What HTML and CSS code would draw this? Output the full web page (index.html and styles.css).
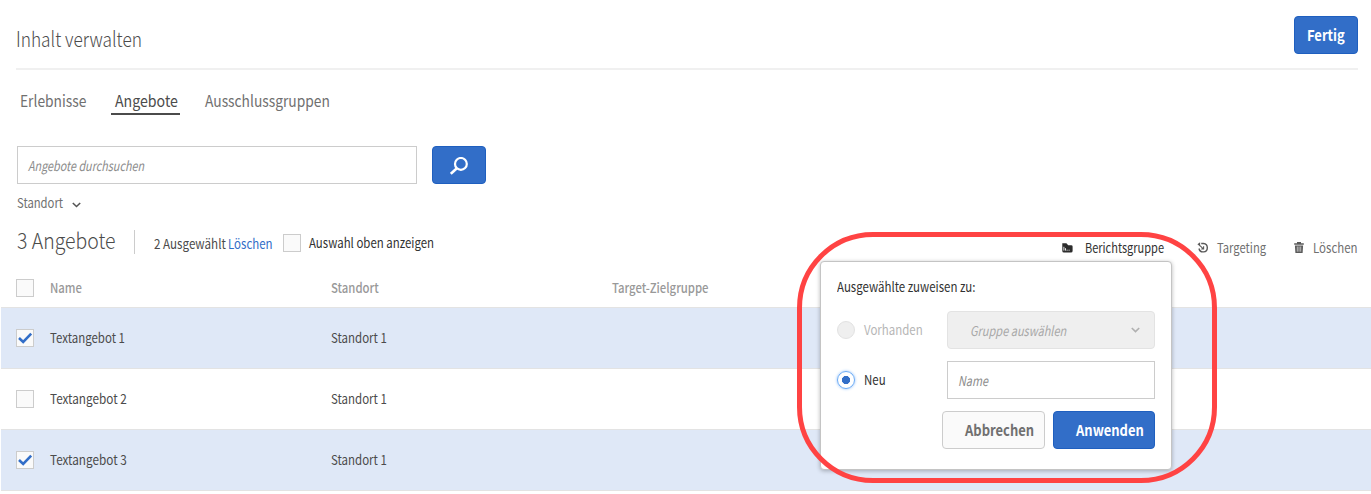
FILE: index.html
```
<!DOCTYPE html>
<html lang="de">
<head>
<meta charset="utf-8">
<title>Inhalt verwalten</title>
<link rel="stylesheet" href="styles.css">
</head>
<body>
<header class="header">
  <h1 class="title">Inhalt verwalten</h1>
  <button class="btn primary done"><span class="label">Fertig</span></button>
</header>
<nav class="tabs">
  <a class="tab t-exp"><span>Erlebnisse</span></a>
  <a class="tab t-off active"><span>Angebote</span></a>
  <a class="tab t-exc"><span>Ausschlussgruppen</span></a>
</nav>
<div class="search">
  <div class="field search-field"><span class="ph ph-search">Angebote durchsuchen</span></div>
  <button class="btn primary search-btn" aria-label="Suchen">
    <svg width="18" height="18" viewBox="0 0 18 18" fill="none" stroke="#fff"><circle cx="10.9" cy="6.9" r="5.9" stroke-width="2.2"/><path d="M6.9 11.2L.8 16.8" stroke-width="2.6"/></svg>
  </button>
</div>
<div class="filter"><span class="filter-label">Standort</span>
  <svg width="9" height="6" viewBox="0 0 9 6" fill="none" stroke="#555" stroke-width="1.6"><path d="M.8 1L4.5 4.5L8.2 1"/></svg>
</div>
<div class="toolbar">
  <div class="count-box"><h2 class="count">3 Angebote</h2></div>
  <div class="selection">
    <span class="selected">2 Ausgewählt</span><a class="clear">Löschen</a>
    <span class="check"></span><span class="on-top">Auswahl oben anzeigen</span>
  </div>
  <div class="actions">
    <span class="action current"><svg width="11" height="10" viewBox="0 0 11 10"><path fill="#2c2c2c" d="M.3 .2H4.4L6.2 2.2H9.2Q10.6 2.2 10.6 3.5V8Q10.6 9.5 9 9.5H2Q.3 9.5 .3 8Z"/><path d="M1.9 3.8V7.6M3.5 5.2V7.6M4.6 7.2H5.6M6.6 7.2H7.6" stroke="#fff" stroke-width=".9"/></svg><span class="a-group">Berichtsgruppe</span></span>
    <span class="action"><svg width="12" height="11" viewBox="0 0 12 11" fill="none" stroke="#5a5a5a" stroke-width="1.4"><path d="M4.2 1.5H6.5A4.2 4.2 0 1 1 2 6.5"/><path d="M.4 2.3L3.1 .3V4.4Z" fill="#5a5a5a" stroke="none"/><path d="M3 3.7L6.3 6.8M6.6 4.3V7H4.2" stroke-width="1.1"/></svg><span class="a-target">Targeting</span></span>
    <span class="action"><svg width="10" height="11" viewBox="0 0 10 11"><path fill="#5a5a5a" d="M3 0H7V1.3H9.8V2.7H.2V1.3H3Z M.9 3.5H9.1L8.6 11H1.4Z"/><path d="M3.3 4.5V9.7M5 4.5V9.7M6.7 4.5V9.7" stroke="#fff" stroke-width=".6"/></svg><span class="a-delete">Löschen</span></span>
  </div>
</div>
<main class="grid">
  <div class="row head"><span class="check"></span><span class="cell">Name</span><span class="cell">Standort</span><span class="cell">Target-Zielgruppe</span></div>
  <div class="row picked"><span class="check"><svg class="tick" viewBox="0 0 16 16"><path d="M2 8L6.2 12L14.2 3.7"/></svg></span><span class="cell">Textangebot 1</span><span class="cell">Standort 1</span></div>
  <div class="row"><span class="check"></span><span class="cell wide">Textangebot 2</span><span class="cell">Standort 1</span></div>
  <div class="row picked"><span class="check"><svg class="tick" viewBox="0 0 16 16"><path d="M2 8L6.2 12L14.2 3.7"/></svg></span><span class="cell wide">Textangebot 3</span><span class="cell">Standort 1</span></div>
</main>
<section class="popover">
  <div class="pop-title">Ausgewählte zuweisen zu:</div>
  <div class="option disabled"><span class="radio"></span><span class="opt-label">Vorhanden</span>
    <div class="field select"><span class="ph ph-select">Gruppe auswählen</span><svg width="9" height="6" viewBox="0 0 9 6" fill="none" stroke="#b0b0b0" stroke-width="1.7"><path d="M.8 1L4.5 4.5L8.2 1"/></svg></div>
  </div>
  <div class="option"><span class="radio on"></span><span class="opt-label">Neu</span>
    <div class="field"><span class="ph ph-name">Name</span></div>
  </div>
  <div class="buttons"><button class="btn cancel"><span class="label">Abbrechen</span></button><button class="btn primary apply"><span class="label">Anwenden</span></button></div>
</section>
<div class="highlight"></div>
</body>
</html>
```
FILE: styles.css
```
* { box-sizing: border-box; }
body {
  margin: 0; width: 1371px; height: 494px; overflow: hidden; position: relative;
  background: #fff; color: #4b4b4b; white-space: nowrap;
  font: 13.5px/18px "Noto Sans CJK SC", "Noto Sans", sans-serif;
}
svg { display: block; flex: none; }

/* condensed text */
.title, .tab span, .ph, .filter-label, .count, .selected, .clear, .on-top,
.a-group, .a-target, .a-delete, .cell, .pop-title, .opt-label, .label {
  transform: translateY(var(--y, 0)) scaleX(var(--w, .85)); transform-origin: 0 50%;
}
.tab span, .filter-label, .a-group, .a-target, .a-delete, .cell, .opt-label { --y: -1px; }

.header {
  display: flex; align-items: flex-start; justify-content: space-between;
  height: 70px; margin: 0 13px 0 16px; padding-top: 16px; border-bottom: 2px solid #f0f0f0;
}
.title { --w: .823; margin: 9px 0 0; font-size: 21px; line-height: 26px; font-weight: 300; }
.btn {
  display: flex; align-items: center; height: 38px; padding: 0; border-radius: 4px;
  border: 1px solid #ccc; background: #fafafa; color: #707070;
  font-family: inherit; font-size: 15px; line-height: 20px; font-weight: 700;
}
.label { --w: .865; }
.primary { background: #326ec8; border-color: #1f5fbf; color: #fff; }
.done { width: 64px; padding-left: 12px; }
.tabs { display: flex; gap: 21px; margin: 20px 0 0 17px; height: 25px; }
.tab { padding: 0 3px; font-size: 16px; line-height: 22px; height: 25px; color: #707070; }
.tab span { display: inline-block; --w: .862; }
.tab.active { width: 69px; color: #4b4b4b; border-bottom: 2px solid #4b4b4b; }
.active span { --w: .885; }
.t-exp { width: 73px; }
.t-off, .t-exc { padding-left: 4px; }
.search { display: flex; gap: 15px; margin: 31px 0 0 17px; }
.field {
  display: flex; align-items: center; width: 208px; height: 38px; padding: 0 10px;
  border: 1px solid #ccc; background: #fff;
}
.search-field { width: 400px; }
.search-btn { width: 54px; justify-content: center; }
.search-btn svg { margin-top: 2px; }
.ph { font-style: italic; color: #8c8c8c; --w: .8; --y: -.5px; }
.ph-select { --w: .815; }
.filter { display: flex; align-items: center; height: 18px; margin: 10px 0 0 17px; color: #707070; }
.filter svg { margin-top: 3px; }
.filter-label { width: 55px; --w: .835; }
.toolbar { display: flex; height: 45px; margin: 11px 14px 0 17px; }
.count-box { width: 118px; margin-top: 7px; height: 24px; border-right: 1px solid #ccc; }
.count { margin: -2px 0 0; font-size: 22px; line-height: 22px; font-weight: 300; --w: .884; }
.selection { display: flex; align-items: center; height: 18px; margin: 11px 0 0 19px; }
.selected { width: 74px; --w: .86; }
.clear { width: 55px; color: #326ec8; }
.check { width: 18px; height: 18px; flex: none; border: 1px solid #ccc; background: #fafafa; }
.on-top { margin-left: 8px; width: 126px; color: #323232; --w: .847; --y: -1px; }
.actions { display: flex; margin: 15px 0 0 auto; height: 19px; }
.action { display: flex; align-items: center; color: #707070; }
.current { color: #323232; }
.a-group { margin-left: 12px; width: 112px; --w: .815; }
.a-target { margin-left: 8px; width: 77px; --w: .83; }
.a-delete { margin-left: 9px; width: 44px; }
.grid { margin-left: 1px; }
.row {
  display: grid; grid-template-columns: 34px 281px 281px 1fr; align-items: center;
  height: 61px; padding-left: 15px; border-bottom: 1px solid #e3e3e3;
}
.head { height: 40px; color: #999; font-weight: 500; }
.head .cell { --w: .84; }
.row .wide { --w: .87; }
.picked { background: #dfe8f7; }
.tick { width: 16px; height: 16px; fill: none; stroke: #326ec8; stroke-width: 2.6; }
.popover {
  position: absolute; left: 820px; top: 261px; width: 352px; height: 209px; padding: 15px 16px 0;
  background: #fff; border: 1px solid #c4c4c4; border-radius: 4px; box-shadow: 0 1px 4px rgba(0,0,0,.28);
  color: #323232;
}
.pop-title { height: 18px; }
.option { display: flex; align-items: center; height: 38px; margin-top: 12px; }
.pop-title + .option { margin-top: 16px; }
.radio { width: 18px; height: 18px; border-radius: 50%; border: 1px solid #e2e2e2; background: #efefef; }
.on { border: 1px solid #6aaaf5; background: radial-gradient(circle, #326ec8 3.8px, #fff 4.4px); box-shadow: 0 0 3px #8bbcfa; }
.opt-label { width: 75px; margin-left: 8.5px; }
.option .field { margin-left: 8.5px; }
.disabled { color: #b6b6b6; }
.disabled .ph { color: #a8a8a8; }
.option .select { background: #efefef; border-color: #e3e3e3; border-radius: 4px; padding: 0 14px 0 22px; justify-content: space-between; }
.buttons { display: flex; justify-content: flex-end; gap: 8px; margin-top: 12px; }
.cancel { width: 103px; padding-left: 22px; }
.apply { width: 102px; padding-left: 22px; }
.highlight {
  position: absolute; left: 797px; top: 232px; width: 420px; height: 251px;
  border: 5px solid #ff4343; border-radius: 76px;
}
```
